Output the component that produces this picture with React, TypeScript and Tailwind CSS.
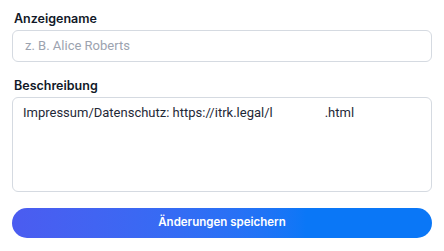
export default function App() {
  return (
    <div className="w-[444px] h-[251px] bg-white px-3 pt-[11px] font-['Inter',sans-serif]">
      <div className="flex flex-col">
        <label className="text-[12.5px] leading-4 font-semibold text-[#111827] px-0.5 mb-[3px]">
          Anzeigename
        </label>
        <div className="h-8 border border-[#d5dae1] rounded-md px-3 flex items-center font-['Roboto',sans-serif] text-[13px] text-[#9ca3af]">
          z. B. Alice Roberts
        </div>
      </div>
      <div className="flex flex-col mt-4">
        <label className="text-[12.5px] leading-4 font-semibold text-[#111827] px-0.5 mb-[3px]">
          Beschreibung
        </label>
        <div className="h-[95px] border border-[#d5dae1] rounded-md px-2.5 pt-1.5 font-['Roboto',sans-serif] text-[13px] leading-[18px] text-[#1f2937]">
          Impressum/Datenschutz: https://itrk.legal/l
          <span className="inline-block w-[52px]"></span>
          .html
        </div>
      </div>
      <button className="mt-4 w-full h-[30px] rounded-full bg-gradient-to-r from-[#4b5cf0] to-[#0a77f7] to-70% text-white text-[11.5px] font-semibold">
        Änderungen speichern
      </button>
    </div>
  );
}
